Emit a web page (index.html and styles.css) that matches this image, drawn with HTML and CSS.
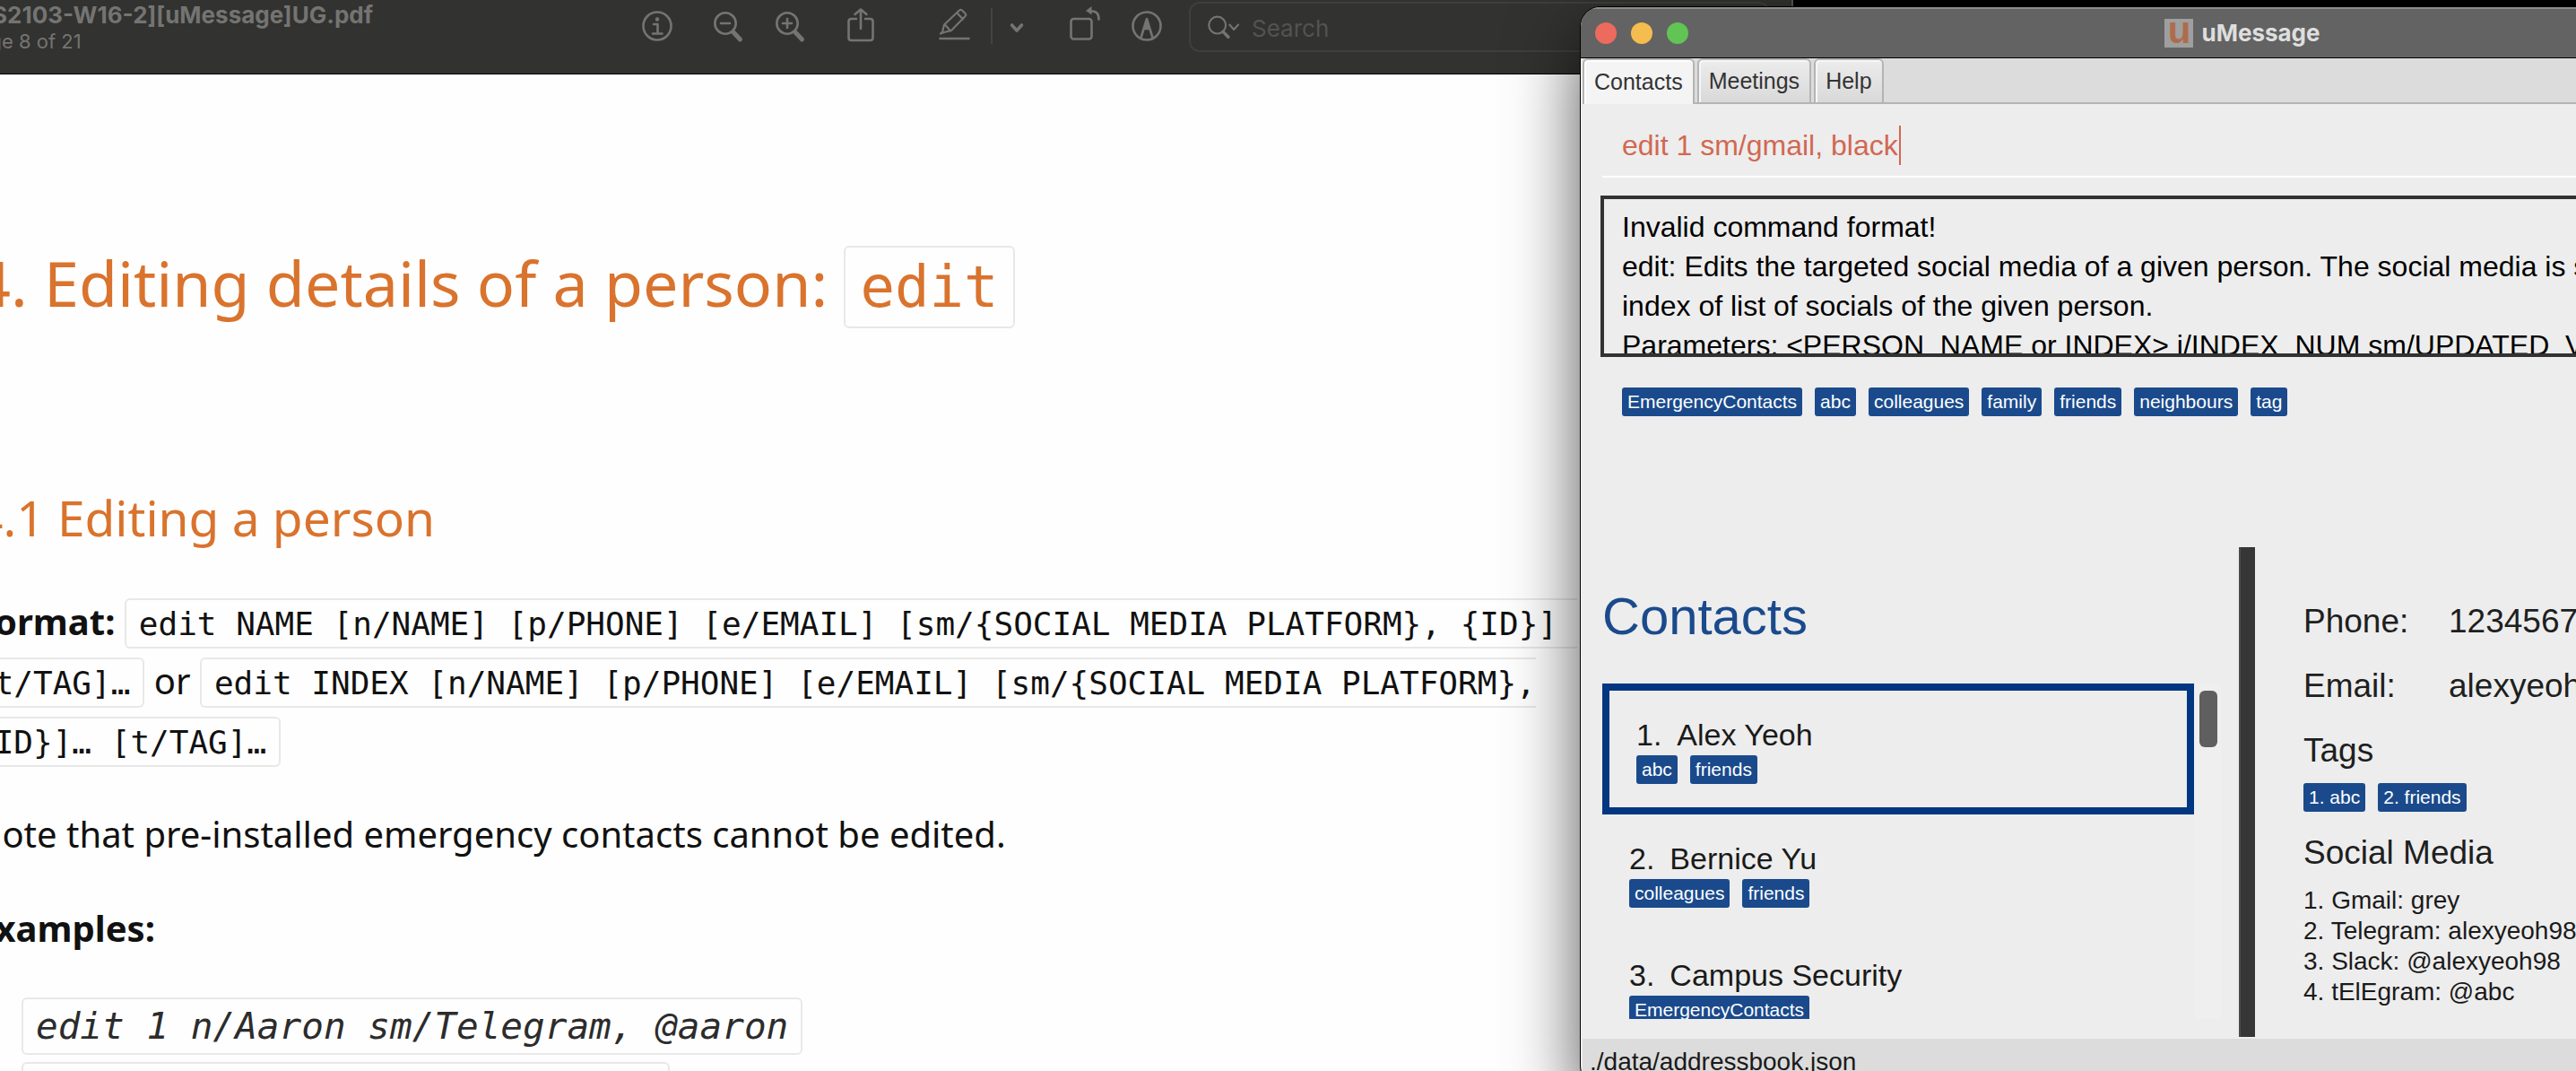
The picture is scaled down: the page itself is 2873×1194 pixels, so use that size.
FILE: index.html
```html
<!DOCTYPE html>
<html lang="en">
<head>
<meta charset="utf-8">
<title>uMessage</title>
<link rel="stylesheet" href="styles.css">
</head>
<body class="desktop">

<section class="viewer" aria-label="PDF viewer">
  <header class="toolbar">
    <div class="doc-title">
      <span class="doc-name">[CS2103-W16-2][uMessage]UG.pdf</span>
      <span class="doc-page">Page 8 of 21</span>
    </div>
    <div class="tools tools-info">
      <button class="tool" aria-label="Info"><svg viewBox="0 0 34 40"><circle cx="17" cy="20" r="15.5"/><path d="M13 18h4.500v10.500M12 28.500h10.500"/><circle class="dot" cx="17" cy="12.500" r="2.200"/></svg></button>
    </div>
    <div class="tools tools-zoom">
      <button class="tool" aria-label="Zoom out"><svg viewBox="0 0 34 40"><circle cx="13" cy="17" r="11.700"/><path d="M8 17h10"/><path class="thick" d="M22 27l7.500 8"/></svg></button>
      <button class="tool" aria-label="Zoom in"><svg viewBox="0 0 34 40"><circle cx="14" cy="17" r="11.700"/><path d="M9 17h10M14 12v10"/><path class="thick" d="M23 27l7.500 8"/></svg></button>
    </div>
    <div class="tools tools-share">
      <button class="tool" aria-label="Share"><svg viewBox="0 0 34 40"><path d="M12 12H6.500q-3 0-3 3v18q0 3 3 3h21q3 0 3-3V15q0-3-3-3H22M17 23V2M10.500 7L17 1.500 23.500 7"/></svg></button>
    </div>
    <div class="tools tools-markup">
      <button class="tool" aria-label="Highlight"><svg viewBox="0 0 34 40"><path d="M1.500 34h32"/><path class="thin" d="M2 28.500l2-1.500 2-8.500L23 2.500q1.500-1.500 3 0l3.500 3.500q1.500 1.500 0 3L14 25l-8 2-4 1.500M7 18.500l6 7M20.500 5.500l6.500 7"/></svg></button>
      <span class="divider"></span>
      <button class="tool" aria-label="Highlight colours"><svg viewBox="0 0 34 40"><path class="mid" d="M11.500 19l5.500 6 5.500-6"/></svg></button>
    </div>
    <div class="tools tools-page">
      <button class="tool" aria-label="Rotate"><svg viewBox="0 0 34 40"><rect x="1.500" y="12" width="23" height="22.500" rx="3"/><path d="M24 3.500q8.500-.500 8.500 9"/><path class="dot" d="M18 3l6.500-5v9.500z"/></svg></button>
      <button class="tool" aria-label="Markup"><svg viewBox="0 0 34 40"><circle cx="17" cy="20" r="15.500"/><path d="M10.500 33l6.500-21 6.500 21M13.500 23h7"/><path class="dot" d="M17 12l-3.500 11h7z"/></svg></button>
    </div>
    <label class="search">
      <svg viewBox="0 0 36 26"><circle cx="11" cy="11" r="9.700"/><path class="mid" d="M17.500 18.500l6 6"/><path d="M25 10.500l5 5.500 5-5.500"/></svg>
      <input class="search-field" type="search" placeholder="Search" aria-label="Search">
    </label>
  </header>
  <article class="page">
    <h1 class="heading">4. Editing details of a person: <code class="code">edit</code></h1>
    <h2 class="subheading">4.1 Editing a person</h2>
    <p class="para"><strong>Format:</strong> <code class="code">edit NAME [n/NAME] [p/PHONE] [e/EMAIL] [sm/{SOCIAL MEDIA PLATFORM}, {ID}]&nbsp;<br>[t/TAG]…</code> or <code class="code">edit INDEX [n/NAME] [p/PHONE] [e/EMAIL] [sm/{SOCIAL MEDIA PLATFORM},<br>{ID}]… [t/TAG]…</code></p>
    <p class="para">Note that pre-installed emergency contacts cannot be edited.</p>
    <p class="para"><strong>Examples:</strong></p>
    <ul class="examples">
      <li><code class="code">edit 1 n/Aaron sm/Telegram, @aaron</code></li>
      <li><code class="code">edit 1 sm/Telegram, @aaron01</code></li>
    </ul>
  </article>
</section>

<main class="app">
  <header class="titlebar">
    <div class="lights"><span class="light close"></span><span class="light minimise"></span><span class="light zoom"></span></div>
    <div class="app-title"><span class="app-icon" aria-hidden="true">u</span>uMessage</div>
  </header>
  <nav class="tabs">
    <button class="tab selected">Contacts</button>
    <button class="tab">Meetings</button>
    <button class="tab">Help</button>
  </nav>
  <div class="command">
    <input class="command-field" type="text" value="edit 1 sm/gmail, black" aria-label="Command">
    <span class="caret"></span>
  </div>
  <textarea class="result" readonly aria-label="Result">Invalid command format!
edit: Edits the targeted social media of a given person. The social media is specified by the
index of list of socials of the given person.
Parameters: &lt;PERSON_NAME or INDEX&gt; i/INDEX_NUM sm/UPDATED_VALUE</textarea>
  <div class="all-tags tags">
    <span class="tag">EmergencyContacts</span><span class="tag">abc</span><span class="tag">colleagues</span><span class="tag">family</span><span class="tag">friends</span><span class="tag">neighbours</span><span class="tag">tag</span>
  </div>
  <div class="split">
    <section class="contacts">
      <h2 class="contacts-title">Contacts</h2>
      <div class="list-view">
        <ol class="people">
          <li class="person active"><div class="name"><span>1.</span><span>Alex Yeoh</span></div><div class="tags"><span class="tag">abc</span><span class="tag">friends</span></div></li>
          <li class="person"><div class="name"><span>2.</span><span>Bernice Yu</span></div><div class="tags"><span class="tag">colleagues</span><span class="tag">friends</span></div></li>
          <li class="person"><div class="name"><span>3.</span><span>Campus Security</span></div><div class="tags"><span class="tag">EmergencyContacts</span></div></li>
        </ol>
        <div class="track"><div class="thumb"></div></div>
      </div>
    </section>
    <div class="splitter"></div>
    <section class="details">
      <dl class="fields">
        <dt>Phone:</dt><dd>12345678</dd>
        <dt>Email:</dt><dd>alexyeoh@example.com</dd>
      </dl>
      <h3 class="details-title">Tags</h3>
      <div class="tags"><span class="tag">1. abc</span><span class="tag">2. friends</span></div>
      <h3 class="details-title social-title">Social Media</h3>
      <ul class="socials">
        <li>1. Gmail: grey</li>
        <li>2. Telegram: alexyeoh98</li>
        <li>3. Slack: @alexyeoh98</li>
        <li>4. tElEgram: @abc</li>
      </ul>
    </section>
  </div>
  <footer class="status">./data/addressbook.json</footer>
</main>

</body>
</html>
```
FILE: styles.css
```css
* { box-sizing: border-box; margin: 0; padding: 0; }
button, input, textarea { font: inherit; color: inherit; border: 0; background: none; border-radius: 0; outline: 0; }

.desktop {
  position: relative;
  height: 100vh;
  overflow: hidden;
  background: #000;
  font-family: "Liberation Sans", Arial, sans-serif;
}

/* PDF viewer window */
.viewer {
  position: absolute;
  left: -100px;
  right: 873px;
  top: 0;
  bottom: 0;
  overflow: hidden;
  border-right: 2px solid #565656;
  background: #fefefe;
}
.toolbar {
  display: flex;
  align-items: flex-start;
  height: 83px;
  padding-left: 62px;
  border-bottom: 1px solid #000;
  background: #323230;
  color: #747472;
  font-family: Inter, sans-serif;
}
.doc-title { display: flex; flex-direction: column; width: 754px; }
.doc-name { font-size: 26px; line-height: 34px; font-weight: 700; white-space: nowrap; }
.doc-page { font-size: 22px; line-height: 24px; }
.tools { display: flex; align-items: center; padding-top: 9px; }
.tools-info { margin-right: 46px; }
.tools-zoom { gap: 34px; margin-right: 45px; }
.tools-share { margin-right: 70px; }
.tools-markup { margin-right: 42px; }
.tools-page { gap: 35px; margin-right: 30px; }
.tool { width: 34px; height: 40px; }
.tool svg { display: block; width: 34px; height: 40px; overflow: visible; }
.toolbar svg { fill: none; stroke: currentColor; stroke-width: 2.6; stroke-linecap: round; stroke-linejoin: round; }
.toolbar .dot { fill: currentColor; stroke: none; }
.toolbar .thick { stroke-width: 5; }
.toolbar .mid { stroke-width: 3.6; }
.toolbar .thin { stroke-width: 2.2; }
.divider { width: 2px; height: 40px; margin: 0 10px 0 24px; background: #434341; }
.search {
  display: flex;
  flex: 1;
  align-items: center;
  gap: 14px;
  height: 56px;
  margin: 2px 24px 0 0;
  padding-left: 19px;
  border: 2px solid #3f3f3d;
  border-radius: 12px;
}
.search svg { flex: none; width: 35px; height: 26px; stroke-width: 2.2; }
.search-field { width: 100%; margin-top: 4px; font-size: 26px; line-height: 32px; }
.search-field::placeholder { color: #535351; opacity: 1; }

.page {
  padding: 184px 0 0 72px;
  color: #111;
  font-family: "Noto Sans", "Open Sans", sans-serif;
  font-size: 40px;
  white-space: nowrap;
}
.heading { color: #d9732d; font-size: 70px; line-height: 96px; font-weight: 400; }
.subheading { margin: 176px 0 45px; color: #d9732d; font-size: 55px; line-height: 76px; font-weight: 400; }
.para { margin-bottom: 39px; line-height: 66px; }
.code {
  padding: 6px 14px 5px;
  border: 2px solid #e8e8e8;
  border-radius: 6px;
  font-family: "DejaVu Sans Mono", monospace;
  font-size: 36px;
  line-height: 1;
}
.heading .code { padding: 7px 16px; font-size: 64px; }
.examples { padding-left: 52px; line-height: 72px; list-style: none; }
.examples .code { padding: 6px 14px; color: #2c2c2c; font-size: 41px; font-style: italic; }

/* uMessage window */
.app {
  position: absolute;
  left: 1763px;
  right: -350px;
  top: 8px;
  display: flex;
  flex-direction: column;
  overflow: hidden;
  border-radius: 22px;
  padding-left: 2px;
  background: #ededed;
  box-shadow: 0 0 0 1px #000, 0 30px 80px rgba(0, 0, 0, .68);
}
.titlebar {
  display: grid;
  grid-template-columns: 1fr auto 1fr;
  align-items: center;
  height: 57px;
  margin-left: -2px;
  padding-left: 16px;
  border-top: 2px solid #8c8c8c;
  border-bottom: 1px solid #000;
  background: #636363;
}
.lights { display: flex; gap: 16px; }
.light { width: 24px; height: 24px; border-radius: 50%; }
.close { background: #ed6a5e; }
.minimise { background: #f5bd4f; }
.zoom { background: #61c454; }
.app-title { display: flex; align-items: center; gap: 9px; color: #dedede; font: 700 26px/32px Inter, sans-serif; }
.app-icon {
  width: 32px;
  height: 32px;
  background: #9f9f9f;
  color: #ae6c4b;
  font: 700 42px/26px "Liberation Sans", sans-serif;
  text-align: center;
}
.tabs { display: flex; gap: 3px; height: 51px; background: #dcdcdc; box-shadow: inset 0 -2px #b4b4b4; }
.tab {
  padding: 0 11px;
  border: 2px solid #b4b4b4;
  border-radius: 6px 6px 0 0;
  background: linear-gradient(#ececec, #d9d9d9);
  box-shadow: inset 2px 2px #f6f6f6;
  color: #333;
  font-size: 25px;
}
.tab.selected { border-bottom: 0; background: #f4f4f4; box-shadow: inset 2px 2px #fff; }
.command { position: relative; margin: 16px 0 20px 22px; }
.command-field {
  display: block;
  width: 100%;
  height: 66px;
  padding: 0 22px 4px;
  border-bottom: 2px solid #fff;
  color: #d16852;
  font-size: 32px;
  line-height: 44px;
}
.caret { position: absolute; left: 331px; top: 8px; width: 2px; height: 44px; background: #d16852; }
.result {
  display: block;
  height: 180px;
  margin: 0 24px 0 20px;
  padding: 9px 20px 0;
  border: 4px solid #323232;
  overflow: hidden;
  resize: none;
  color: #000;
  font-size: 32px;
  line-height: 44px;
}
.tags { display: flex; gap: 14px; }
.tag {
  height: 32px;
  padding: 0 6px;
  border-radius: 3px;
  background: #1a4a8c;
  color: #fff;
  font-size: 21px;
  line-height: 32px;
  white-space: nowrap;
}
.all-tags { min-height: 212px; padding: 34px 0 0 44px; align-items: flex-start; }
.split { display: flex; height: 548px; }
.contacts { flex: none; width: 712px; margin-right: 20px; padding: 45px 0 22px 22px; display: flex; flex-direction: column; }
.contacts-title { margin-bottom: 43px; color: #1a4a8c; font-size: 58px; line-height: 64px; font-weight: 400; }
.list-view { display: flex; flex: 1; min-height: 0; }
.people { flex: 1; overflow: hidden; list-style: none; }
.person { padding: 27px 30px 26px; color: #1a1a1a; }
.person.active { border: 8px solid #003780; }
.name { display: flex; gap: 17px; margin-bottom: 1px; font-size: 34px; line-height: 44px; }
.track { width: 30px; padding: 8px 4px 0 6px; background: #efefef; }
.thumb { height: 63px; border-radius: 6px; background: #5f5f5f; }
.splitter { flex: none; width: 18px; margin-bottom: 2px; border-left: 2px solid #4a4a4a; background: #363636; }
.details { flex: 1; padding: 47px 0 0 54px; color: #1d2020; }
.fields { display: grid; grid-template-columns: 162px 1fr; font-size: 37px; line-height: 72px; }
.details-title { font-size: 37px; line-height: 72px; font-weight: 400; }
.social-title { margin-top: 10px; }
.socials { font-size: 28px; line-height: 34px; color: #1a1a1a; list-style: none; }
.status { height: 52px; padding: 9px 8px 0; background: #dcdcdc; color: #1a1a1a; font-size: 28px; line-height: 34px; }
```
